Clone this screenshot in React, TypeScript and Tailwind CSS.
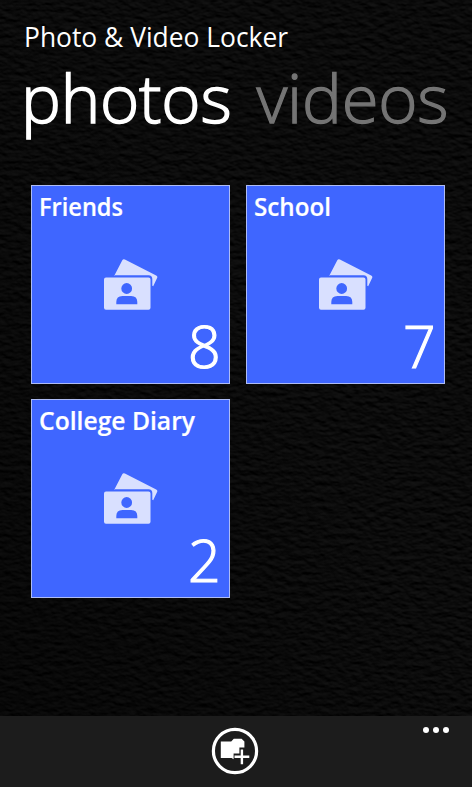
const albums = [
  { name: "Friends", count: 8, textWidth: 84 },
  { name: "School", count: 7, textWidth: 77 },
  { name: "College Diary", count: 2, textWidth: 156 },
];

// dark leather grain behind the whole page
function Leather() {
  return (
    <svg className="absolute inset-0 h-full w-full" aria-hidden="true">
      <filter id="leather" x="0" y="0" width="100%" height="100%" colorInterpolationFilters="sRGB">
        <feTurbulence type="fractalNoise" baseFrequency="0.11 0.19" numOctaves="3" seed="21" result="grain" />
        <feDiffuseLighting in="grain" surfaceScale="1.8" diffuseConstant="0.085" lightingColor="#ffffff">
          <feDistantLight azimuth="285" elevation="30" />
        </feDiffuseLighting>
      </filter>
      <linearGradient id="shade" x1="1" y1="0" x2="0" y2="1">
        <stop offset="0.4" stopColor="#000" stopOpacity="0" />
        <stop offset="1" stopColor="#000" stopOpacity="0.35" />
      </linearGradient>
      <rect width="100%" height="100%" filter="url(#leather)" />
      <rect width="100%" height="100%" fill="url(#shade)" />
    </svg>
  );
}

function PhotosIcon() {
  return (
    <svg viewBox="0 0 54 52" className="h-[52px] w-[54px]" fill="#d9e0ff">
      <path d="M10 17.2 18.3 1.3Q19.2-.3 20.9.6L52.2 16.5Q53.9 17.4 53.1 19L49.2 27.2 48.3 26.8V20Q48.3 16.2 44.5 16.2H10Z" />
      <path
        fillRule="evenodd"
        d="M2 18.5H44.5Q46.5 18.5 46.5 20.5V48.7Q46.5 50.7 44.5 50.7H2Q0 50.7 0 48.7V20.5Q0 18.5 2 18.5ZM22.7 24.1a5.4 5.4 0 1 0 0 10.8a5.4 5.4 0 1 0 0-10.8ZM12.3 45.3H33.3V43Q33.3 36.9 27.2 36.9H18.4Q12.3 36.9 12.3 43Z"
      />
    </svg>
  );
}

function AddFolderIcon() {
  return (
    <svg viewBox="0 0 48 48" className="h-12 w-12">
      <circle cx="24" cy="24" r="21.6" fill="none" stroke="#fff" strokeWidth="3.2" />
      <path
        fill="#fff"
        d="M9.8 14.4H20.2L22.8 11.8H30.6L33.4 14.6V20.6H28.4V26.4H22.6V32.2L20.6 31H9.8Z"
      />
      <path d="M30.9 22.4V37.2M23.5 29.8H38.3" stroke="#fff" strokeWidth="2.4" />
    </svg>
  );
}

function Tile({ name, count, textWidth }: { name: string; count: number; textWidth: number }) {
  return (
    <button className="relative flex h-[199px] w-[199px] flex-col border border-[#aebcf4] bg-[#3f66ff] px-[7px] text-left">
      <span className="mt-1 block h-8">
        <svg className="block h-8 w-[180px] overflow-visible" fill="#fff">
          <text
            x="0"
            y="25.5"
            textLength={textWidth}
            lengthAdjust="spacingAndGlyphs"
            stroke="#fff"
            strokeWidth="0.2"
            className="text-[25px] font-semibold"
          >
            {name}
          </text>
        </svg>
      </span>
      <span className="mt-[37px] ml-[65px] block">
        <PhotosIcon />
      </span>
      <span className="absolute right-[8px] bottom-[2px] origin-right scale-x-[0.97] text-[59px] leading-[72px] font-light [-webkit-text-stroke:1.2px_#fff]">
        {count}
      </span>
    </button>
  );
}

export default function App() {
  return (
    <main className="relative flex h-[787px] w-[472px] flex-col overflow-hidden bg-[#080808] font-['Open_Sans','Noto_Sans',sans-serif] text-white">
      <Leather />

      <header className="relative pl-6">
        <h1 className="mt-[18px] h-[38px] text-[26.4px] leading-[38px] whitespace-nowrap">Photo &amp; Video Locker</h1>
        <nav className="flex h-[96px] origin-left items-start gap-[25px] text-[67px] leading-[83px] font-light tracking-[-0.2px] whitespace-nowrap">
          <span className="-ml-[3px] [-webkit-text-stroke:1.5px_#fff]">photos</span>
          <span className="text-[#747474] [-webkit-text-stroke:1.3px_#747474]">videos</span>
        </nav>
      </header>

      <section className="relative mt-[33px] ml-[31px] grid grid-cols-[199px_199px] gap-x-[16px] gap-y-[15px]">
        {albums.map((a) => (
          <Tile key={a.name} {...a} />
        ))}
      </section>

      <footer className="relative mt-auto flex h-[71px] justify-center bg-[#1c1c1c]">
        <button className="mt-[11px] mr-[2px] h-12 w-12">
          <AddFolderIcon />
        </button>
        <button className="absolute top-[11px] right-[23px] flex gap-1">
          <span className="h-[6px] w-[6px] rounded-full bg-white" />
          <span className="h-[6px] w-[6px] rounded-full bg-white" />
          <span className="h-[6px] w-[6px] rounded-full bg-white" />
        </button>
      </footer>
    </main>
  );
}
